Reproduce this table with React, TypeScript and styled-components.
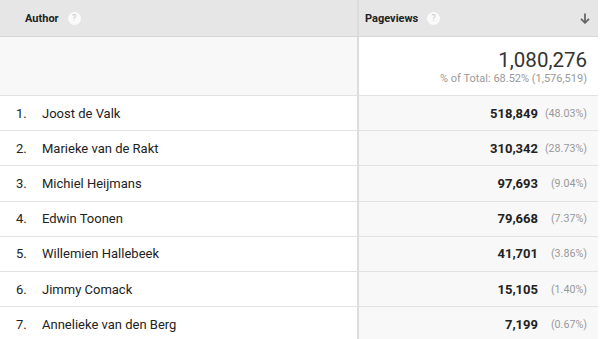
import React from "react";
import styled, { createGlobalStyle } from "styled-components";

const Global = createGlobalStyle`
  html, body { margin: 0; padding: 0; background: #ffffff; }
  body { font-family: Roboto, "Liberation Sans", Arial, sans-serif; }
`;

const Table = styled.div`
  width: 598px;
  display: grid;
  grid-template-columns: 357px 241px;
  border-right: 1px solid #dedede;
  box-sizing: border-box;
`;

const HeadCell = styled.div<{ $right?: boolean }>`
  height: 36px;
  background: #e6e6e6;
  border-bottom: 1px solid #d6d6d6;
  ${(p) => (p.$right ? "border-left: 2px solid #dcdcdc;" : "")}
  display: flex;
  align-items: center;
  padding-left: ${(p) => (p.$right ? "6px" : "25px")};
  padding-right: 8px;
  font-size: 11px;
  font-weight: 700;
  color: #222;
  gap: 9px;
`;

const Help = styled.span`
  width: 13px;
  height: 13px;
  border-radius: 50%;
  background: #fafafa;
  color: #c8c8c8;
  font-size: 9px;
  font-weight: 400;
  display: inline-flex;
  align-items: center;
  justify-content: center;
`;

const Spacer = styled.span`
  flex: 1;
`;

const SummaryCell = styled.div<{ $right?: boolean }>`
  height: 58px;
  border-bottom: 1px solid #e2e2e2;
  background: ${(p) => (p.$right ? "#ffffff" : "#f8f8f8")};
  ${(p) => (p.$right ? "border-left: 2px solid #dcdcdc;" : "")}
  display: flex;
  flex-direction: column;
  align-items: flex-end;
  justify-content: center;
  padding-right: 11px;
`;

const Total = styled.div`
  font-size: 20.5px;
  color: #333;
  line-height: 24px;
  margin-top: 1px;
`;

const TotalSub = styled.div`
  font-size: 11px;
  color: #9a9a9a;
  line-height: 13px;
`;

const NameCell = styled.div`
  height: 34.2px;
  border-bottom: 1px solid #e2e2e2;
  background: #ffffff;
  display: flex;
  align-items: center;
  font-size: 13px;
  color: #222;
`;

const Rank = styled.span`
  width: 26px;
  padding-left: 16px;
`;

const ValueCell = styled.div`
  height: 34.2px;
  border-bottom: 1px solid #e2e2e2;
  border-left: 2px solid #dcdcdc;
  background: #f8f8f8;
  display: flex;
  align-items: center;
  justify-content: flex-end;
  padding-right: 11px;
`;

const Value = styled.span`
  font-size: 13px;
  font-weight: 700;
  color: #222;
`;

const Pct = styled.span`
  width: 49px;
  text-align: right;
  font-size: 10.7px;
  color: #999;
`;

const rows = [
  ["Joost de Valk", "518,849", "(48.03%)"],
  ["Marieke van de Rakt", "310,342", "(28.73%)"],
  ["Michiel Heijmans", "97,693", "(9.04%)"],
  ["Edwin Toonen", "79,668", "(7.37%)"],
  ["Willemien Hallebeek", "41,701", "(3.86%)"],
  ["Jimmy Comack", "15,105", "(1.40%)"],
  ["Annelieke van den Berg", "7,199", "(0.67%)"],
];

const SortArrow = () => (
  <svg width="10" height="11" viewBox="0 0 10 11">
    <path d="M5 0.5 V9.5 M1 5.8 L5 9.8 L9 5.8" stroke="#666" strokeWidth="1.8" fill="none" />
  </svg>
);

export default function App() {
  return (
    <>
      <Global />
      <Table>
        <HeadCell>
          Author <Help>?</Help>
        </HeadCell>
        <HeadCell $right>
          Pageviews <Help>?</Help>
          <Spacer />
          <SortArrow />
        </HeadCell>
        <SummaryCell />
        <SummaryCell $right>
          <Total>1,080,276</Total>
          <TotalSub>% of Total: 68.52% (1,576,519)</TotalSub>
        </SummaryCell>
        {rows.map(([name, v, p], i) => (
          <React.Fragment key={name}>
            <NameCell>
              <Rank>{i + 1}.</Rank>
              {name}
            </NameCell>
            <ValueCell>
              <Value>{v}</Value>
              <Pct>{p}</Pct>
            </ValueCell>
          </React.Fragment>
        ))}
      </Table>
    </>
  );
}
